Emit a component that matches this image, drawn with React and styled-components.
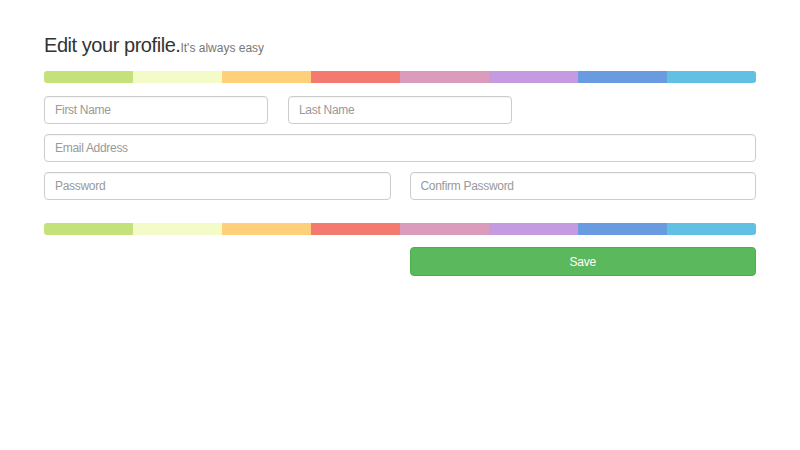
import React from 'react'
import styled, { createGlobalStyle } from 'styled-components'

const GlobalStyle = createGlobalStyle`
  body {
    margin: 0;
    background: #ffffff;
    font-family: "Liberation Sans", Arial, sans-serif;
  }
`

const stripeColors = ['#c5e17b', '#f5fbc8', '#fdd079', '#f27a6e', '#db9bbb', '#c49be0', '#699be1', '#62c0e2']

const Page = () => {
  return (
    <Wrapper>
      <GlobalStyle />
      <Title>
        Edit your profile.<small>It's always easy</small>
      </Title>
      <Stripe />
      <Form>
        <Row cols={3}>
          <Input placeholder="First Name" />
          <Input placeholder="Last Name" />
        </Row>
        <Row cols={1}>
          <Input placeholder="Email Address" />
        </Row>
        <Row cols={2}>
          <Input type="password" placeholder="Password" />
          <Input type="password" placeholder="Confirm Password" />
        </Row>
      </Form>
      <Stripe className="bottom" />
      <Row cols={2}>
        <span />
        <SaveButton type="button">Save</SaveButton>
      </Row>
    </Wrapper>
  )
}

const Stripe = ({ className }) => (
  <StripeBar className={className}>
    {stripeColors.map((c) => (
      <StripePart key={c} color={c} />
    ))}
  </StripeBar>
)

export default function App() {
  return <Page />
}

const Wrapper = styled.div`
  width: 712px;
  margin: 0 auto;
  padding-top: 34px;

  .bottom {
    margin-top: 23px;
    margin-bottom: 12px;
  }
`

const Title = styled.h1`
  margin: 0 0 12px;
  font-size: 20px;
  line-height: 22px;
  font-weight: 400;
  letter-spacing: -0.45px;
  color: #333333;

  small {
    font-size: 12px;
    letter-spacing: 0;
    color: #777777;
  }
`

const StripeBar = styled.div`
  display: flex;
  height: 12px;
  border-radius: 3px;
  overflow: hidden;
`

const StripePart = styled.div`
  flex: 1;
  background: ${(p) => p.color};
`

const Form = styled.div`
  display: flex;
  flex-direction: column;
  gap: 10px;
  margin-top: 13px;
`

const Row = styled.div`
  display: grid;
  grid-template-columns: repeat(${(p) => p.cols}, 1fr);
  column-gap: ${(p) => (p.cols === 2 ? '19px' : '20px')};
`

const Input = styled.input`
  box-sizing: border-box;
  height: 28px;
  width: 100%;
  padding: 0 10px;
  border: 1px solid #cccccc;
  border-radius: 4px;
  font-family: "Liberation Sans", Arial, sans-serif;
  font-size: 12px;
  letter-spacing: -0.3px;
  color: #555555;
  outline: none;
  box-shadow: inset 0 1px 1px rgb(0 0 0 / 4%);

  &::placeholder {
    color: #999999;
  }
`

const SaveButton = styled.button`
  box-sizing: border-box;
  height: 29px;
  width: 100%;
  border: 1px solid #4cae4c;
  border-radius: 4px;
  background: #5cb85c;
  color: #ffffff;
  font-family: "Liberation Sans", Arial, sans-serif;
  font-size: 12px;
  letter-spacing: -0.2px;
  cursor: pointer;
`
